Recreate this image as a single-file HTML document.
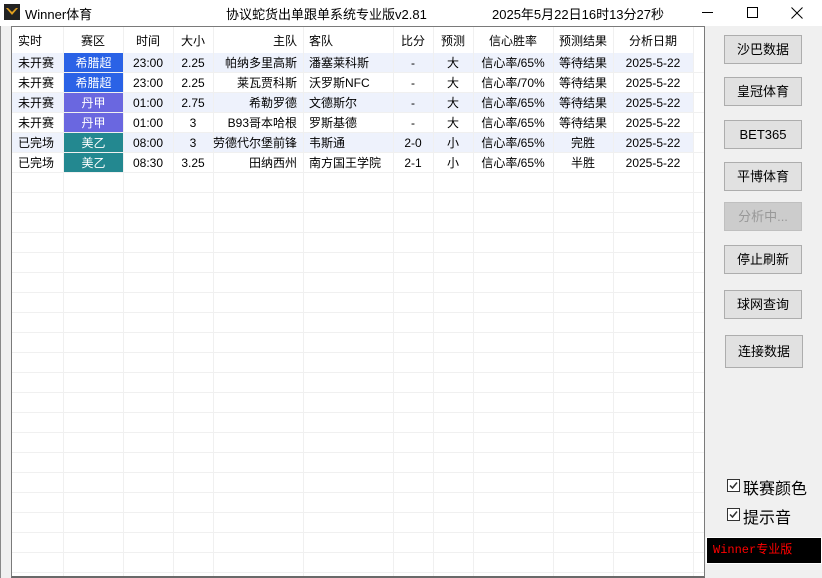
<!DOCTYPE html>
<html><head><meta charset="utf-8"><style>
*{margin:0;padding:0;box-sizing:border-box}
body{width:822px;height:578px;background:#f0f0f0;font-family:"Liberation Sans","Noto Sans CJK SC",sans-serif;font-size:12px;color:#000;position:relative;overflow:hidden}
.abs{position:absolute}
#tb{left:0;top:0;width:822px;height:26px;background:#fff}
#frame{left:11px;top:26px;width:694px;height:552px;border-left:1px solid #7a7a7a;border-top:1px solid #7a7a7a;border-right:1px solid #7a7a7a;border-bottom:2px solid #6a6a6a;background:#fff;overflow:hidden}
.cell{position:absolute;height:20px;line-height:20px;white-space:nowrap;overflow:hidden}
.btn{position:absolute;left:724px;width:78px;height:29px;background:#e1e1e1;border:1px solid #adadad;text-align:center;line-height:27px;font-size:13px}
</style></head><body>
<div class="abs" style="left:0;top:0;width:1px;height:578px;background:#888"></div>
<div id="tb" class="abs">
 <svg class="abs" style="left:4px;top:4px" width="16" height="16"><rect width="16" height="16" fill="#222"/><path d="M2 4 L8 11 L14 4 L12 4 L8 8 L4 4Z" fill="#e0a020"/></svg>
 <div class="abs" style="left:25px;top:4px;font-size:13px">Winner体育</div>
 <div class="abs" style="left:226px;top:4px;font-size:13px">协议蛇货出单跟单系统专业版v2.81</div>
 <div class="abs" style="left:492px;top:4px;font-size:13px">2025年5月22日16时13分27秒</div>
 <div class="abs" style="left:702px;top:12px;width:11px;height:1px;background:#000"></div>
 <div class="abs" style="left:747px;top:7px;width:11px;height:11px;border:1px solid #000"></div>
 <svg class="abs" style="left:791px;top:7px" width="12" height="12"><path d="M0.5 0.5L11.5 11.5M11.5 0.5L0.5 11.5" stroke="#000" stroke-width="1"/></svg>
</div>
<div id="frame" class="abs">
<svg class="abs" style="left:0;top:0" width="694" height="552" id="grid"></svg>
<div id="cells"></div>
</div>
<div class="btn" style="top:35px">沙巴数据</div>
<div class="btn" style="top:77px">皇冠体育</div>
<div class="btn" style="top:120px">BET365</div>
<div class="btn" style="top:162px">平博体育</div>
<div class="btn" style="top:202px;background:#cccccc;border-color:#bfbfbf;color:#999">分析中...</div>
<div class="btn" style="top:245px">停止刷新</div>
<div class="btn" style="top:290px">球网查询</div>
<div class="btn" style="top:335px;left:725px;height:33px;line-height:31px">连接数据</div>
<div class="abs" style="left:727px;top:479px;width:13px;height:13px;border:1px solid #333;background:#fff"><svg width="11" height="11" style="position:absolute;left:0;top:0"><path d="M2 5.5L4.5 8L9 2.5" stroke="#333" stroke-width="1.5" fill="none"/></svg></div>
<div class="abs" style="left:743px;top:475px;font-size:16px">联赛颜色</div>
<div class="abs" style="left:727px;top:508px;width:13px;height:13px;border:1px solid #333;background:#fff"><svg width="11" height="11" style="position:absolute;left:0;top:0"><path d="M2 5.5L4.5 8L9 2.5" stroke="#333" stroke-width="1.5" fill="none"/></svg></div>
<div class="abs" style="left:743px;top:504px;font-size:16px">提示音</div>
<div class="abs" style="left:706px;top:537px;width:116px;height:27px;background:#000;border:1px solid #fff;color:#f00;font-family:'Liberation Mono','Noto Sans CJK SC',monospace;font-size:12px;line-height:25px;padding-left:6px">Winner专业版</div>
<script>
const xs=[0,51,111,161,201,291,381,421,461,541,601,681];
const g=document.getElementById('grid');let s='';
const rows=[
['未开赛','希腊超','23:00','2.25','帕纳多里高斯','潘塞莱科斯','-','大','信心率/65%','等待结果','2025-5-22','#2a62e6'],
['未开赛','希腊超','23:00','2.25','莱瓦贾科斯','沃罗斯NFC','-','大','信心率/70%','等待结果','2025-5-22','#2a62e6'],
['未开赛','丹甲','01:00','2.75','希勒罗德','文德斯尔','-','大','信心率/65%','等待结果','2025-5-22','#6a67e0'],
['未开赛','丹甲','01:00','3','B93哥本哈根','罗斯基德','-','大','信心率/65%','等待结果','2025-5-22','#6a67e0'],
['已完场','美乙','08:00','3','劳德代尔堡前锋','韦斯通','2-0','小','信心率/65%','完胜','2025-5-22','#238890'],
['已完场','美乙','08:30','3.25','田纳西州','南方国王学院','2-1','小','信心率/65%','半胜','2025-5-22','#238890']];
rows.forEach((r,i)=>{if(i%2==0)s+=`<rect x="0" y="${26+i*20}" width="681" height="20" fill="#eef2fc"/>`;});
for(let y=45;y<552;y+=20)s+=`<rect x="0" y="${y}" width="694" height="1" fill="#f0f0f0"/>`;
xs.slice(1).forEach(x=>s+=`<rect x="${x}" y="0" width="1" height="552" fill="#f0f0f0"/>`);
g.innerHTML=s;
const al=['l','c','c','c','r','l','c','c','c','c','c'];
const hd=['实时','赛区','时间','大小','主队','客队','比分','预测','信心胜率','预测结果','分析日期'];
let h='';
function cell(x,w,y,t,a,extra){const pad=a=='l'?'padding-left:6px;':a=='r'?'padding-right:6px;':'';h+=`<div class="cell" style="left:${x}px;top:${y}px;width:${w}px;text-align:${a=='l'?'left':a=='r'?'right':'center'};${pad}${extra||''}">${t}</div>`;}
hd.forEach((t,j)=>cell(xs[j],xs[j+1]-xs[j],4,t,al[j]));
rows.forEach((r,i)=>{for(let j=0;j<11;j++){cell(xs[j]+(j==1?1:0),xs[j+1]-xs[j]-(j==1?1:0),26+i*20,r[j],al[j],j==1?`background:${r[11]};color:#fff;height:19px;`:'');}});
document.getElementById('cells').innerHTML=h;
</script>
</body></html>
